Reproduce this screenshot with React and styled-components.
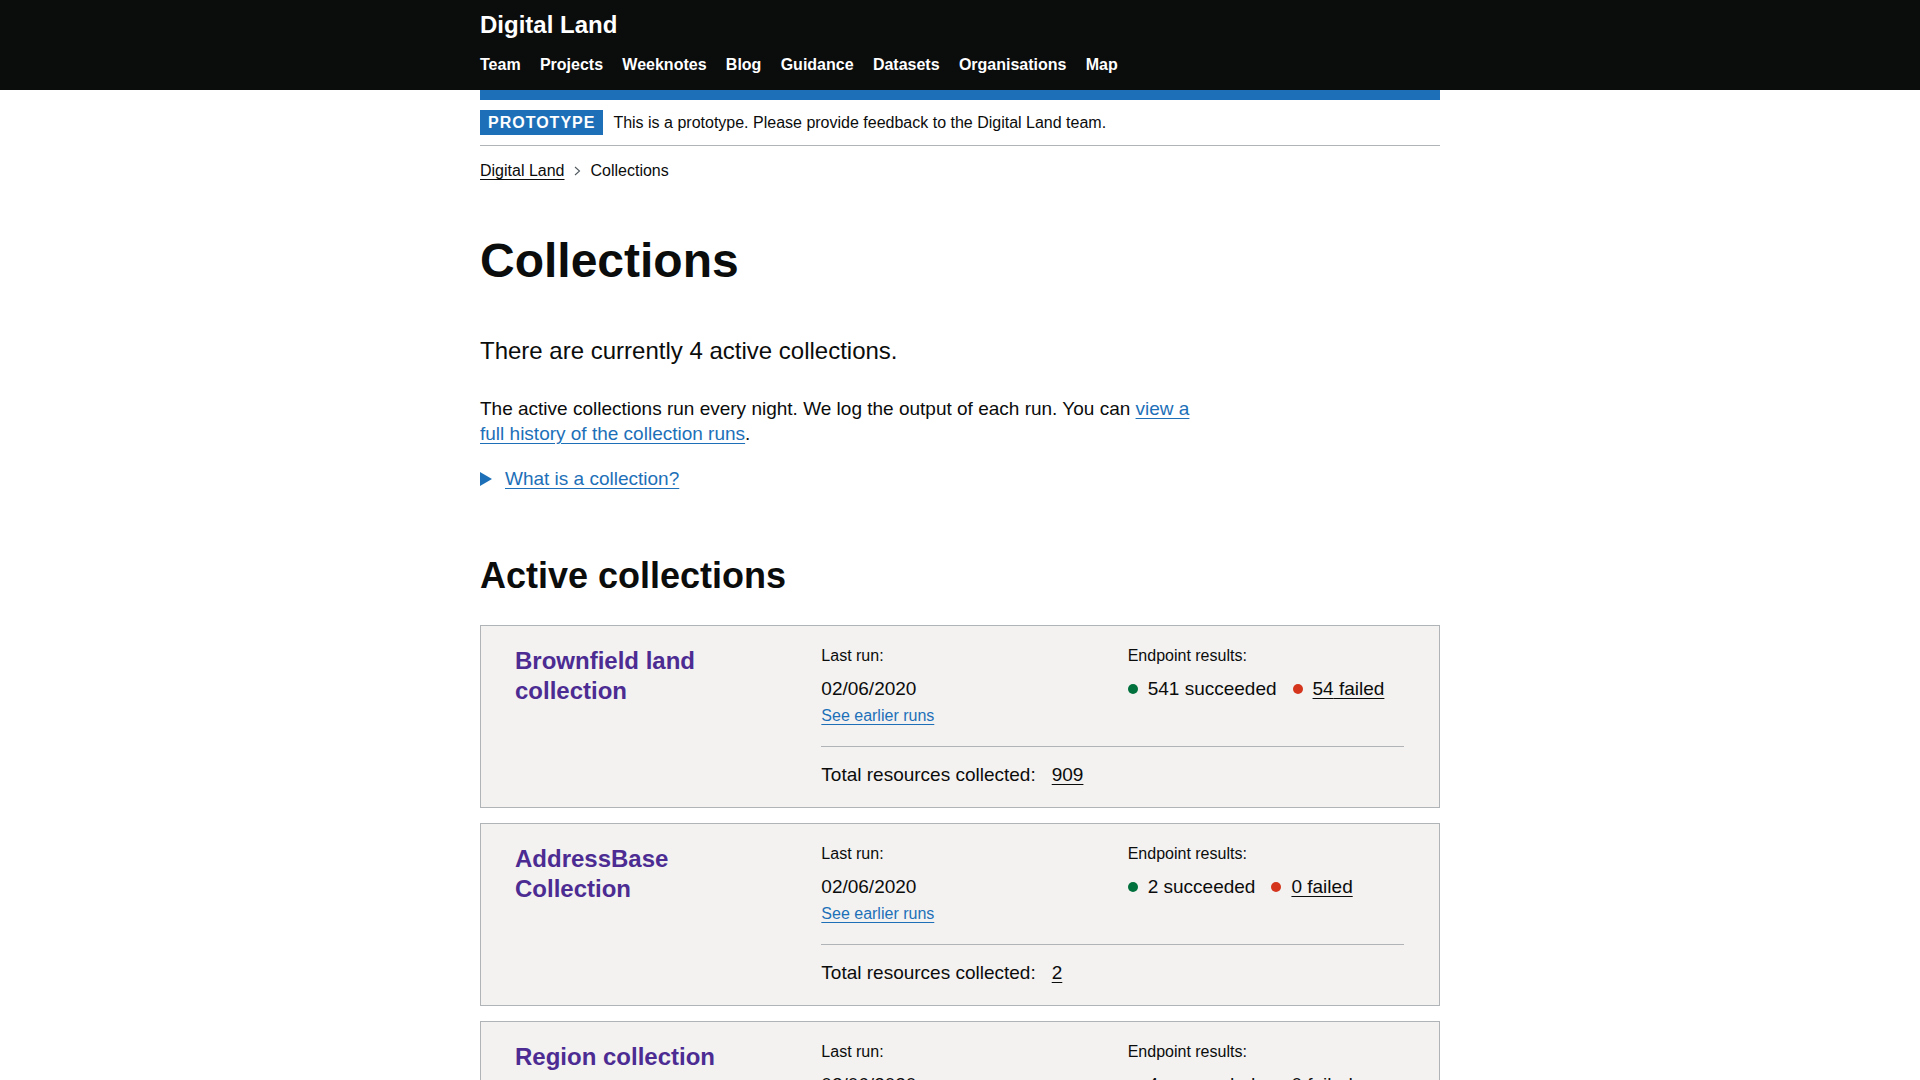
import React from "react";
import styled, { createGlobalStyle } from "styled-components";

const navItems = [
  "Team",
  "Projects",
  "Weeknotes",
  "Blog",
  "Guidance",
  "Datasets",
  "Organisations",
  "Map",
];

const collections = [
  {
    name: "Brownfield land collection",
    lastRun: "02/06/2020",
    succeeded: 541,
    failed: 54,
    total: 909,
  },
  {
    name: "AddressBase Collection",
    lastRun: "02/06/2020",
    succeeded: 2,
    failed: 0,
    total: 2,
  },
  {
    name: "Region collection",
    lastRun: "02/06/2020",
    succeeded: 4,
    failed: 0,
    total: 4,
  },
];

const App = () => {
  return (
    <>
      <GlobalStyle />
      <Header>
        <Container>
          <SiteTitle href="#">Digital Land</SiteTitle>
          <Nav>
            {navItems.map((item) => (
              <NavLink key={item} href="#">
                {item}
              </NavLink>
            ))}
          </Nav>
        </Container>
      </Header>

      <Container>
        <BlueRule />

        <PhaseBanner>
          <Tag>Prototype</Tag>
          <BannerText>
            This is a prototype. Please provide feedback to the Digital Land
            team.
          </BannerText>
        </PhaseBanner>

        <Breadcrumbs>
          <CrumbLink href="#">Digital Land</CrumbLink>
          <Chevron width="7" height="10" viewBox="0 0 7 10">
            <polyline
              points="1,1 5.5,5 1,9"
              fill="none"
              stroke="#505a5f"
              strokeWidth="1.1"
            />
          </Chevron>
          <span>Collections</span>
        </Breadcrumbs>

        <main>
          <PageTitle>Collections</PageTitle>
          <Lead>There are currently 4 active collections.</Lead>
          <Body>
            The active collections run every night. We log the output of each
            run. You can{" "}
            <BlueLink href="#">view a full history of the collection runs</BlueLink>
            .
          </Body>

          <Summary>
            <svg width="12" height="14" viewBox="0 0 12 14">
              <polygon points="0,0 12,7 0,14" fill="#1d70b8" />
            </svg>
            <BlueLink href="#">What is a collection?</BlueLink>
          </Summary>

          <SectionTitle>Active collections</SectionTitle>

          <CardList>
            {collections.map((c) => (
              <Card key={c.name}>
                <CardTitle href="#">{c.name}</CardTitle>
                <CardDetails>
                  <StatsGrid>
                    <div>
                      <Label>Last run:</Label>
                      <Value>{c.lastRun}</Value>
                      <SmallLink href="#">See earlier runs</SmallLink>
                    </div>
                    <div>
                      <Label>Endpoint results:</Label>
                      <ResultRow>
                        <Dot $color="#00703c" />
                        <span>{c.succeeded} succeeded</span>
                        <Dot $color="#d4351c" $spaced />
                        <DarkLink href="#">{c.failed} failed</DarkLink>
                      </ResultRow>
                    </div>
                  </StatsGrid>
                  <Divider />
                  <TotalRow>
                    <span>Total resources collected:</span>
                    <DarkLink href="#">{c.total}</DarkLink>
                  </TotalRow>
                </CardDetails>
              </Card>
            ))}
          </CardList>
        </main>
      </Container>
    </>
  );
};

export default App;

/* ===== STYLES ===== */

const GlobalStyle = createGlobalStyle`
  * {
    box-sizing: border-box;
  }

  body {
    margin: 0;
    background: #ffffff;
    color: #0b0c0c;
    font-family: "Liberation Sans", Arial, sans-serif;
  }

  h1, h2, p {
    margin: 0;
  }
`;

const Container = styled.div`
  width: 960px;
  margin: 0 auto;
`;

const Header = styled.header`
  background: #0b0c0c;
  padding: 10px 0 15px;
`;

const SiteTitle = styled.a`
  display: block;
  color: #fff;
  font-size: 24px;
  line-height: 30px;
  font-weight: 700;
  text-decoration: none;
`;

const Nav = styled.nav`
  display: flex;
  gap: 19.3px;
  margin-top: 15px;
`;

const NavLink = styled.a`
  color: #fff;
  font-size: 16px;
  line-height: 20px;
  font-weight: 700;
  text-decoration: none;
`;

const BlueRule = styled.div`
  height: 10px;
  background: #1d70b8;
`;

const PhaseBanner = styled.div`
  display: flex;
  align-items: center;
  padding: 10px 0;
  border-bottom: 1px solid #b1b4b6;
`;

const Tag = styled.strong`
  display: inline-block;
  padding: 5px 8px 4px;
  background: #1d70b8;
  color: #fff;
  font-size: 16px;
  line-height: 16px;
  font-weight: 700;
  letter-spacing: 1px;
  text-transform: uppercase;
`;

const BannerText = styled.span`
  margin-left: 10px;
  font-size: 16px;
  line-height: 20px;
`;

const Breadcrumbs = styled.nav`
  display: flex;
  align-items: center;
  margin-top: 15px;
  font-size: 16px;
  line-height: 20px;
`;

const CrumbLink = styled.a`
  color: #0b0c0c;
  text-decoration: underline;
  text-underline-offset: 0.1578em;
`;

const Chevron = styled.svg`
  margin: 0 10px 0 9px;
`;

const PageTitle = styled.h1`
  margin-top: 55px;
  margin-bottom: 50px;
  font-size: 48px;
  line-height: 50px;
  font-weight: 700;
`;

const Lead = styled.p`
  font-size: 24px;
  line-height: 30px;
  margin-bottom: 30px;
`;

const Body = styled.p`
  max-width: 712px;
  font-size: 19px;
  line-height: 25px;
  margin-bottom: 20px;
`;

const BlueLink = styled.a`
  color: #1d70b8;
  text-decoration: underline;
  text-underline-offset: 0.1578em;
`;

const Summary = styled.div`
  display: flex;
  align-items: center;
  gap: 13px;
  font-size: 19px;
  line-height: 25px;
`;

const SectionTitle = styled.h2`
  margin-top: 65px;
  margin-bottom: 29px;
  font-size: 36px;
  line-height: 40px;
  font-weight: 700;
`;

const CardList = styled.div`
  display: flex;
  flex-direction: column;
  gap: 15px;
  padding-bottom: 40px;
`;

const Card = styled.section`
  display: grid;
  grid-template-columns: repeat(3, 1fr);
  column-gap: 30px;
  padding: 20px 35px 20px 34px;
  background: #f3f2f1;
  border: 1px solid #b1b4b6;
`;

const CardTitle = styled.a`
  align-self: start;
  padding-right: 10px;
  color: #4c2c92;
  font-size: 24px;
  line-height: 30px;
  font-weight: 700;
  text-decoration: none;
`;

const CardDetails = styled.div`
  grid-column: span 2;
`;

const StatsGrid = styled.div`
  display: grid;
  grid-template-columns: 1fr 1fr;
  column-gap: 30px;
`;

const Label = styled.p`
  font-size: 16px;
  line-height: 20px;
  margin-bottom: 10px;
`;

const Value = styled.p`
  font-size: 19px;
  line-height: 25px;
`;

const SmallLink = styled(BlueLink)`
  display: inline-block;
  margin-top: 5px;
  font-size: 16px;
  line-height: 20px;
`;

const ResultRow = styled.div`
  display: flex;
  align-items: center;
  font-size: 19px;
  line-height: 25px;
`;

const Dot = styled.span`
  width: 10px;
  height: 10px;
  border-radius: 50%;
  background: ${(p) => p.$color};
  margin: 0 10px 0 ${(p) => (p.$spaced ? "16px" : "0")};
`;

const DarkLink = styled.a`
  color: #0b0c0c;
  text-decoration: underline;
  text-underline-offset: 0.1578em;
`;

const Divider = styled.hr`
  margin: 20px 0 15px;
  border: 0;
  border-top: 1px solid #b1b4b6;
`;

const TotalRow = styled.div`
  display: flex;
  gap: 16px;
  font-size: 19px;
  line-height: 25px;
`;
